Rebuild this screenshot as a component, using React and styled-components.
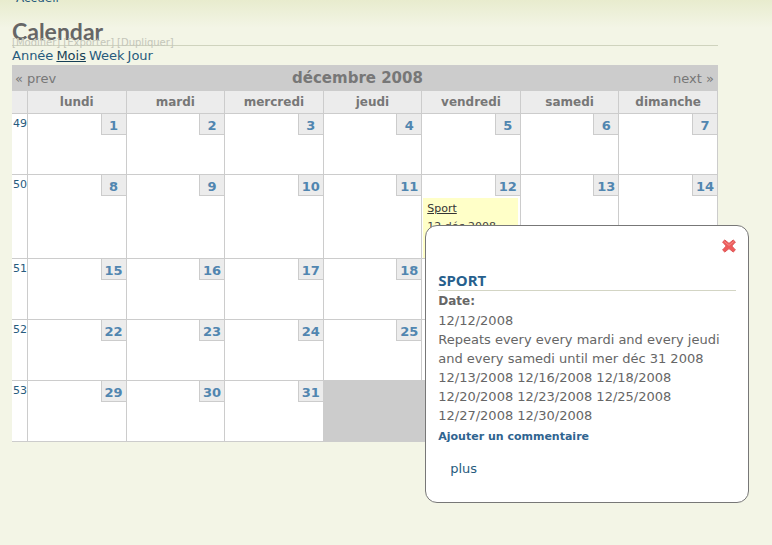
import React from "react";
import styled, { createGlobalStyle, css } from "styled-components";

const GlobalStyle = createGlobalStyle`
  * { box-sizing: border-box; }
  body {
    margin: 0;
    background: #f3f5e6 linear-gradient(#e8ecce, #f3f5e6) 0 0 / 100% 28px no-repeat;
    color: #666;
    font-family: "DejaVu Sans", Verdana, sans-serif;
    font-size: 13px;
    line-height: 19px;
  }
  a { color: #275b7d; text-decoration: none; }
`;

const Page = styled.main`
  display: flow-root;
  min-height: 100vh;
  padding: 0 54px 0 12px;
`;

const Breadcrumb = styled.nav`
  height: 12px;
  padding-left: 4px;
  margin-top: -8px;
  font-size: 12px;
  line-height: 12px;
`;

const TitleBar = styled.header`
  position: relative;
  height: 42px;
  padding-top: 13px;
  border-bottom: 1px solid #cfd3be;
`;

const Title = styled.h1`
  margin: 0;
  color: #666;
  font: bold 23px/28px Lato, "Trebuchet MS", sans-serif;
`;

const AdminLinks = styled.div`
  position: absolute;
  left: 0;
  bottom: -4px;
  display: flex;
  gap: 3px;
  font-size: 10px;
  line-height: 12px;

  a { color: #c4c6ba; }
`;

const ViewLinks = styled.nav`
  display: flex;
  gap: 3px;
`;

const ViewLink = styled.a`
  ${(p) => p.$active && css`color: #163f55; text-decoration: underline;`}
`;

const MonthBar = styled.div`
  display: grid;
  grid-template-columns: 1fr auto 1fr;
  align-items: center;
  height: 26px;
  padding: 0 4px 0 3px;
  background: #ccc;
  color: #777;

  a { color: #777; }
  a:last-child { text-align: right; }
`;

const MonthName = styled.h2`
  margin: 0;
  padding-right: 14px;
  font-size: 15px;
  font-weight: bold;
`;

const MonthTable = styled.table`
  width: 100%;
  table-layout: fixed;
  border-collapse: separate;
  border-spacing: 0;
  background: #fff;
`;

const DayHeading = styled.th`
  width: ${(p) => (p.$week ? "16px" : "auto")};
  height: 23px;
  padding: 0;
  border-right: 1px solid #ccc;
  border-bottom: 1px solid #ccc;
  background: #ececec;
  color: #777;
  font: bold 12px/18px "DejaVu Sans", Verdana, sans-serif;
`;

const Cell = styled.td`
  position: relative;
  height: ${(p) => (p.$tall ? "84px" : "61px")};
  padding: 0;
  border-right: 1px solid #ccc;
  border-bottom: 1px solid #ccc;
  background: ${(p) => (p.$empty ? "#ccc" : "#fff")};
  vertical-align: top;
`;

const WeekLink = styled.a`
  display: block;
  padding-left: 1px;
  font-size: 11px;
`;

const DayLink = styled.a`
  display: block;
  width: 25px;
  height: 21px;
  margin-left: auto;
  border: solid #ccc;
  border-width: 0 0 1px 1px;
  background: #ececec;
  color: #5186b0;
  font-weight: bold;
  line-height: 23px;
  text-align: center;
`;

const EventBox = styled.div`
  height: 60px;
  margin: 2px 2px 0 1px;
  padding: 2px 4px;
  background: #ffffc8;
  color: #444;
  font-size: 11px;
  line-height: 18px;
  white-space: nowrap;

  a { color: #333; text-decoration: underline; }
`;

const Popup = styled.section`
  position: absolute;
  z-index: 2;
  top: 50px;
  left: 3px;
  width: 324px;
  padding: 13px 12px 24px;
  border: 1px solid #777;
  border-radius: 12px;
  background: #fff;
`;

const CloseButton = styled.button`
  display: block;
  width: 14px;
  height: 14px;
  margin: 0 0 0 auto;
  padding: 0;
  border: 0;
  background: none;

  svg { display: block; }
`;

const PopupTitle = styled.h3`
  margin: 17px 0 0;
  border-bottom: 1px solid #d3d5c4;
  color: #275f8d;
  font: bold 15px/20px "Noto Sans", "Trebuchet MS", sans-serif;
`;

const FieldLabel = styled.div`
  padding-top: 1px;
  font-size: 12px;
  font-weight: bold;
`;

const Paragraph = styled.p`
  margin: 0;
`;

const CommentLink = styled.a`
  display: block;
  padding-top: 2px;
  color: #2f6490;
  font-size: 11px;
  font-weight: bold;
`;

const MoreLink = styled.a`
  display: inline-block;
  margin: 13px 0 0 12px;
`;

const DAYS = ["lundi", "mardi", "mercredi", "jeudi", "vendredi", "samedi", "dimanche"];
const WEEKS = [49, 50, 51, 52, 53];

function CloseIcon() {
  return (
    <svg width="14" height="14" viewBox="0 0 14 14" aria-hidden="true">
      <path d="M2.8 1 L7 4.4 L11.2 1 L13.4 3 L9.8 7 L13.4 11 L11.2 13 L7 9.6 L2.8 13 L0.6 11 L4.2 7 L0.6 3 Z" fill="#ef5b5b" stroke="#dc5555" strokeLinejoin="round" />
      <path d="M2.6 2.8 L7 6.4 L11.4 2.8" fill="none" stroke="#f58a84" strokeLinecap="round" />
    </svg>
  );
}

function SportPopup() {
  return (
    <Popup>
      <CloseButton type="button" aria-label="Fermer"><CloseIcon /></CloseButton>
      <PopupTitle>SPORT</PopupTitle>
      <FieldLabel>Date:</FieldLabel>
      <Paragraph>12/12/2008</Paragraph>
      <Paragraph>
        Repeats every every mardi and every jeudi and every samedi until mer déc 31 2008<br />
        12/13/2008 12/16/2008 12/18/2008 12/20/2008 12/23/2008 12/25/2008 12/27/2008 12/30/2008
      </Paragraph>
      <CommentLink href="#commentaire">Ajouter un commentaire</CommentLink>
      <MoreLink href="#plus">plus</MoreLink>
    </Popup>
  );
}

function DayCell({ day, tall }) {
  if (day > 31) return <Cell $empty />;
  return (
    <Cell $tall={tall}>
      <DayLink href={`#jour-${day}`}>{day}</DayLink>
      {day === 12 && (
        <>
          <EventBox>
            <a href="#sport">Sport</a>
            <div>12 déc 2008</div>
          </EventBox>
          <SportPopup />
        </>
      )}
    </Cell>
  );
}

export default function App() {
  return (
    <>
      <GlobalStyle />
      <Page>
        <Breadcrumb><a href="#accueil">Accueil</a></Breadcrumb>
        <TitleBar>
          <Title>Calendar</Title>
          <AdminLinks>
            <a href="#modifier">[Modifier]</a>
            <a href="#exporter">[Exporter]</a>
            <a href="#dupliquer">[Dupliquer]</a>
          </AdminLinks>
        </TitleBar>
        <ViewLinks>
          <ViewLink href="#annee">Année</ViewLink>
          <ViewLink href="#mois" $active>Mois</ViewLink>
          <ViewLink href="#week">Week</ViewLink>
          <ViewLink href="#jour">Jour</ViewLink>
        </ViewLinks>
        <MonthBar>
          <a href="#prev">« prev</a>
          <MonthName>décembre 2008</MonthName>
          <a href="#next">next »</a>
        </MonthBar>
        <MonthTable>
          <thead>
            <tr>
              <DayHeading $week aria-label="Semaine" />
              {DAYS.map((d) => <DayHeading key={d} scope="col">{d}</DayHeading>)}
            </tr>
          </thead>
          <tbody>
            {WEEKS.map((week, w) => (
              <tr key={week}>
                <Cell $tall={w === 1}><WeekLink href={`#semaine-${week}`}>{week}</WeekLink></Cell>
                {DAYS.map((d, i) => <DayCell key={d} day={w * 7 + i + 1} tall={w === 1} />)}
              </tr>
            ))}
          </tbody>
        </MonthTable>
      </Page>
    </>
  );
}
